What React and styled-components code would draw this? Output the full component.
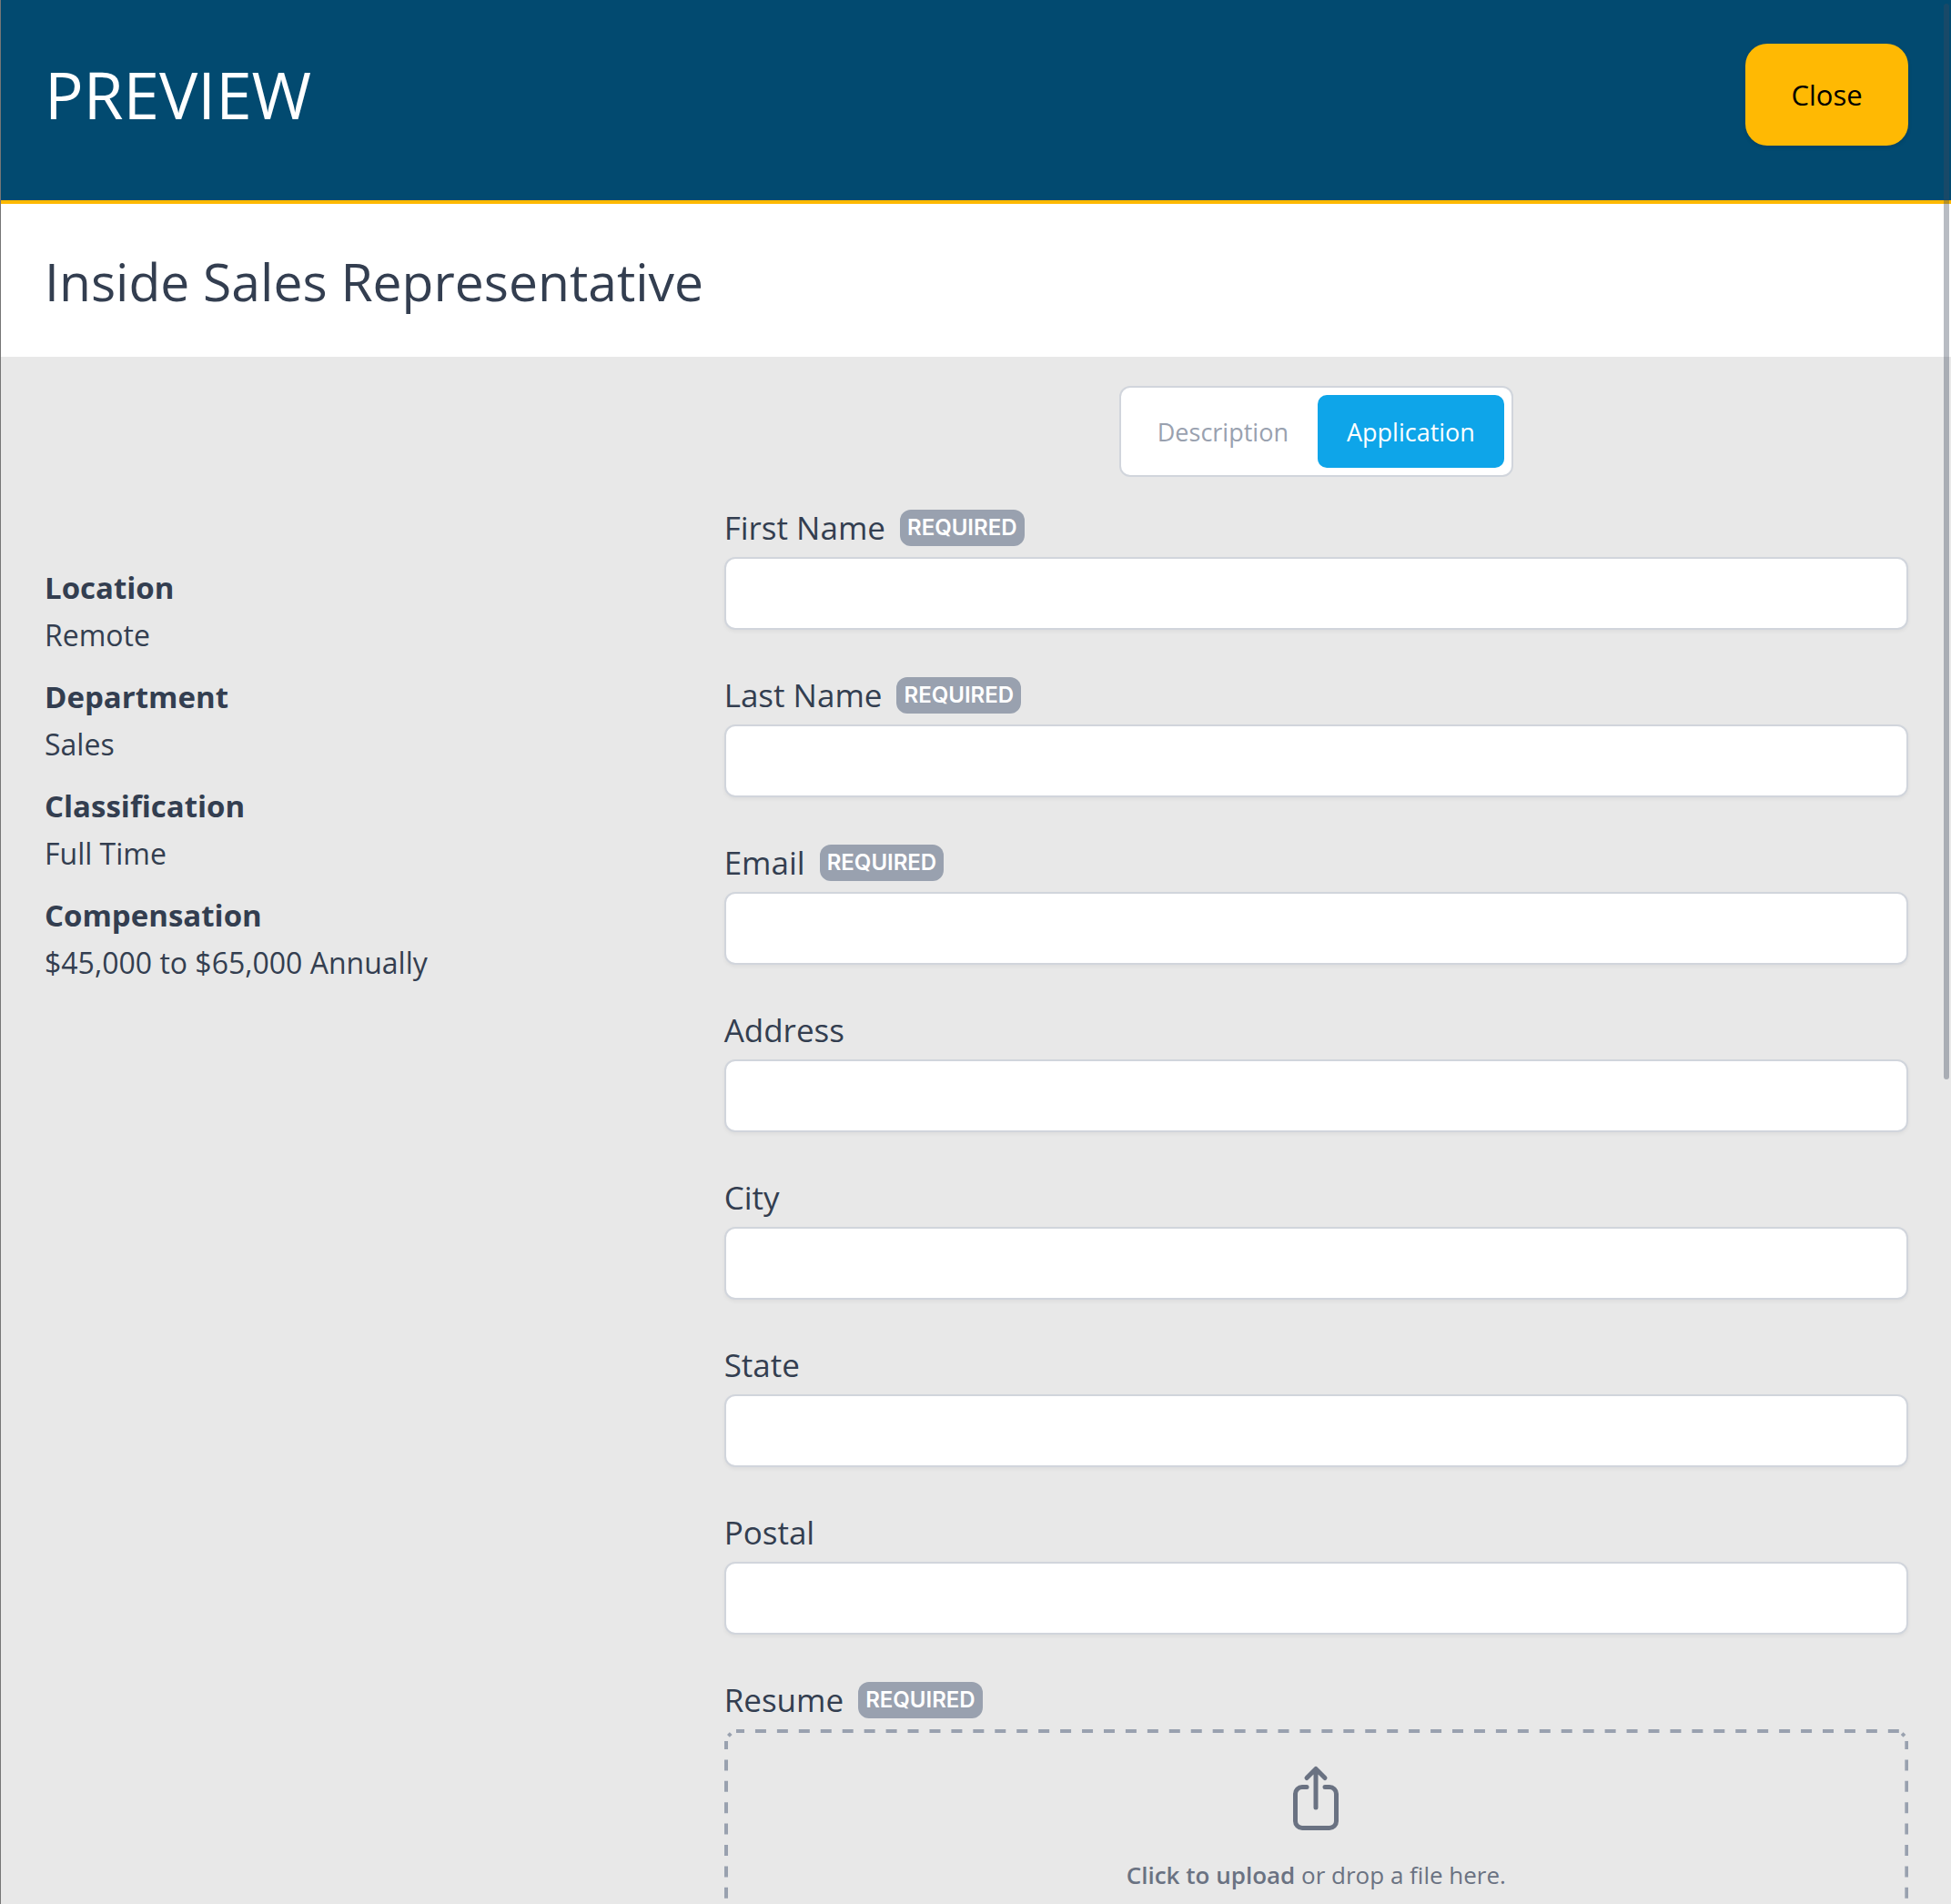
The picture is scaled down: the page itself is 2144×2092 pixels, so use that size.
import React from 'react';
import styled, { createGlobalStyle } from 'styled-components';

const GlobalStyle = createGlobalStyle`
  *, *::before, *::after { box-sizing: border-box; }
  html, body, #root { height: 100%; }
  body {
    margin: 0;
    background: #e8e8e8;
    color: #333e50;
    font-family: "Open Sans", "Noto Sans", sans-serif;
  }
  button, input { font: inherit; color: inherit; }
`;

const Page = styled.div`
  height: 100vh;
  overflow-y: auto;
  scrollbar-width: none;
`;

const Panel = styled.div`
  min-height: 100%;
  border-left: 1px solid #767676;
  padding-bottom: 48px;
`;

const Header = styled.header`
  display: flex;
  align-items: center;
  justify-content: space-between;
  padding: 48px 47px 60px 48px;
  background: #024a70;
  border-bottom: 4px solid #ffb900;
`;

const HeaderTitle = styled.h1`
  margin: 0;
  font-size: 71px;
  font-weight: 400;
  line-height: 80px;
  color: #ffffff;
`;

const CloseButton = styled.button`
  min-width: 179px;
  height: 112px;
  padding: 0 48px;
  border: 0;
  border-radius: 24px;
  background: #ffb903;
  color: #000000;
  font-size: 31px;
  box-shadow: 0 2px 4px rgba(0, 0, 0, 0.12);
  cursor: pointer;
`;

const TitleBar = styled.div`
  padding: 45px 47px 43px 48px;
  background: #ffffff;
`;

const JobTitle = styled.h2`
  margin: 0;
  font-size: 57px;
  font-weight: 400;
  line-height: 80px;
`;

const Columns = styled.div`
  display: grid;
  grid-template-columns: repeat(3, minmax(0, 1fr));
  column-gap: 192px;
  padding: 32px 47px 0 48px;
`;

const Details = styled.dl`
  display: flex;
  flex-direction: column;
  gap: 16px;
  margin: 0;
  padding-top: 194px;
`;

const DetailName = styled.dt`
  font-size: 33px;
  font-weight: 700;
  line-height: 56px;
`;

const DetailValue = styled.dd`
  margin: 0;
  font-size: 32px;
  line-height: 48px;
  white-space: nowrap;
`;

const Main = styled.main`
  grid-column: span 2;
  display: flex;
  flex-direction: column;
  gap: 32px;
`;

const TabList = styled.div`
  display: flex;
  align-self: center;
  padding: 8px;
  border: 2px solid #d1d5dc;
  border-radius: 12px;
  background: #ffffff;
`;

const Tab = styled.button`
  height: 80px;
  padding: 0 32px;
  border: 0;
  border-radius: 10px;
  background: ${(p) => (p.$active ? '#0ea5e9' : 'transparent')};
  color: ${(p) => (p.$active ? '#ffffff' : '#99a1af')};
  font-size: 27px;
  cursor: pointer;
`;

const Form = styled.form`
  display: flex;
  flex-direction: column;
  gap: 48px;
`;

const Field = styled.div`
  display: flex;
  flex-direction: column;
  gap: 8px;
`;

const FieldLabel = styled.label`
  display: flex;
  align-items: center;
  gap: 16px;
  height: 48px;
  font-size: 35px;
  line-height: 48px;
`;

const Badge = styled.span`
  height: 40px;
  padding: 0 8px;
  border-radius: 12px;
  background: #99a1af;
  color: #ffffff;
  font-family: Inter, sans-serif;
  font-size: 24px;
  font-weight: 600;
  line-height: 40px;
`;

const TextInput = styled.input`
  width: 100%;
  height: 80px;
  padding: 0 24px;
  border: 2px solid #d1d5dc;
  border-radius: 12px;
  background: #ffffff;
  font-size: 32px;
  box-shadow: 0 2px 4px rgba(0, 0, 0, 0.05);
`;

const DropZone = styled.label`
  position: relative;
  display: flex;
  flex-direction: column;
  align-items: center;
  gap: 24px;
  height: 256px;
  padding: 36px;
  color: #6a7282;
  font-size: 26px;
  line-height: 40px;
  cursor: pointer;
`;

const DashedFrame = styled.svg`
  position: absolute;
  inset: 0;
  width: 100%;
  height: 100%;
  fill: none;
  stroke: #99a1af;
  stroke-width: 4px;
  pointer-events: none;
`;

const FileInput = styled.input`
  position: absolute;
  width: 1px;
  height: 1px;
  overflow: hidden;
  clip-path: inset(50%);
`;

const UploadIcon = styled.svg`
  flex: none;
  width: 80px;
  height: 80px;
`;

const Strong = styled.strong`
  font-weight: 600;
`;

const ScrollThumb = styled.div`
  position: fixed;
  top: 4px;
  right: 2px;
  width: 6px;
  height: 56.5vh;
  border-radius: 3px;
  background: rgba(62, 72, 92, 0.37);
  pointer-events: none;
`;

const details = [
  ['Location', 'Remote'],
  ['Department', 'Sales'],
  ['Classification', 'Full Time'],
  ['Compensation', '$45,000 to $65,000 Annually'],
];

const fields = [
  { id: 'first-name', label: 'First Name', required: true },
  { id: 'last-name', label: 'Last Name', required: true },
  { id: 'email', label: 'Email', type: 'email', required: true },
  { id: 'address', label: 'Address' },
  { id: 'city', label: 'City' },
  { id: 'state', label: 'State' },
  { id: 'postal', label: 'Postal' },
];

/* One vertical side of the drop zone frame, with the dash of its top corner. */
function FrameSide() {
  return (
    <>
      <path d="M4.4 7.4 7.2 4.6" />
      <path d="M2 13V243" strokeDasharray="12 11.4" strokeDashoffset="3" />
      <path d="M4.4 248.6 7.2 251.4" />
    </>
  );
}

function Frame() {
  return (
    <DashedFrame aria-hidden="true">
      <line x1="13" y1="2" x2="100%" y2="2" strokeDasharray="12 11.94" strokeDashoffset="3" />
      <FrameSide />
      <svg x="100%" overflow="visible">
        <g transform="scale(-1 1)">
          <FrameSide />
        </g>
      </svg>
      <svg y="100%" overflow="visible">
        <line x1="13" y1="-2" x2="100%" y2="-2" strokeDasharray="12 11.94" strokeDashoffset="3" />
      </svg>
    </DashedFrame>
  );
}

export default function App() {
  return (
    <>
      <GlobalStyle />
      <Page>
        <Panel>
          <Header>
            <HeaderTitle>PREVIEW</HeaderTitle>
            <CloseButton type="button">Close</CloseButton>
          </Header>
          <TitleBar>
            <JobTitle>Inside Sales Representative</JobTitle>
          </TitleBar>
          <Columns>
            <Details>
              {details.map(([name, value]) => (
                <div key={name}>
                  <DetailName>{name}</DetailName>
                  <DetailValue>{value}</DetailValue>
                </div>
              ))}
            </Details>
            <Main>
              <TabList role="tablist">
                <Tab type="button" role="tab" aria-selected="false">
                  Description
                </Tab>
                <Tab type="button" role="tab" aria-selected="true" $active>
                  Application
                </Tab>
              </TabList>
              <Form>
                {fields.map(({ id, label, type = 'text', required }) => (
                  <Field key={id}>
                    <FieldLabel htmlFor={id}>
                      {label}
                      {required && <Badge>REQUIRED</Badge>}
                    </FieldLabel>
                    <TextInput id={id} name={id} type={type} required={required} />
                  </Field>
                ))}
                <Field>
                  <FieldLabel htmlFor="resume">
                    Resume
                    <Badge>REQUIRED</Badge>
                  </FieldLabel>
                  <DropZone htmlFor="resume">
                    <Frame />
                    <FileInput id="resume" name="resume" type="file" required />
                    <UploadIcon
                      viewBox="0 0 24 24"
                      fill="none"
                      stroke="currentColor"
                      strokeWidth="1.5"
                      strokeLinecap="round"
                      strokeLinejoin="round"
                      aria-hidden="true"
                    >
                      <path d="M9 8.25H7.5a2.25 2.25 0 0 0-2.25 2.25v9a2.25 2.25 0 0 0 2.25 2.25h9a2.25 2.25 0 0 0 2.25-2.25v-9a2.25 2.25 0 0 0-2.25-2.25H15m0-3-3-3m0 0-3 3m3-3V15" />
                    </UploadIcon>
                    <span>
                      <Strong>Click to upload</Strong> or drop a file here.
                    </span>
                  </DropZone>
                </Field>
              </Form>
            </Main>
          </Columns>
        </Panel>
      </Page>
      <ScrollThumb />
    </>
  );
}
